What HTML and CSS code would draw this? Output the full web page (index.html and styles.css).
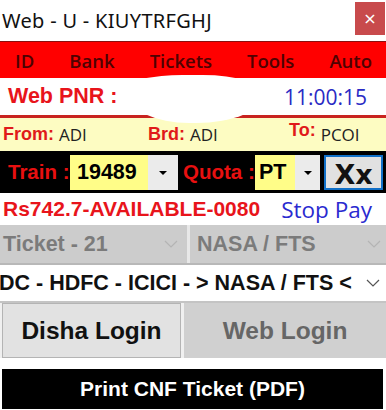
FILE: index.html
```html
<!DOCTYPE html>
<html>
<head>
<meta charset="utf-8">
<link rel="stylesheet" href="styles.css">
</head>
<body>
<div class="win">
  <div class="titlebar">
    <span class="title">Web - U - KIUYTRFGHJ</span>
    <span class="close">×</span>
  </div>
  <div class="menu">
    <span>ID</span><span>Bank</span><span>Tickets</span><span>Tools</span><span>Auto</span>
  </div>
  <div class="pnr">
    <span class="pnr-label">Web PNR :</span>
    <span class="time">11:00:15</span>
    <span class="blob"></span>
  </div>
  <div class="route">
    <span class="lbl">From:</span><span class="val v1">ADI</span>
    <span class="lbl l2">Brd:</span><span class="val v2">ADI</span>
    <span class="lbl l3">To:</span><span class="val">PCOI</span>
  </div>
  <div class="train">
    <span class="tlbl">Train :</span>
    <div class="combo c1"><span class="field">19489</span><span class="arrow"></span></div>
    <span class="tlbl q">Quota :</span>
    <div class="combo c2"><span class="field">PT</span><span class="arrow"></span></div>
    <div class="xx">Xx</div>
  </div>
  <div class="status">
    <span class="avail">Rs742.7-AVAILABLE-0080</span>
    <span class="stop">Stop Pay</span>
  </div>
  <div class="tickets">
    <div class="dis d1"><span>Ticket - 21</span><svg class="chev" viewBox="0 0 14 8"><path d="M1 1 L7 7 L13 1" fill="none" stroke="#b4b4b4" stroke-width="1.2"/></svg></div>
    <div class="dis d2"><span>NASA / FTS</span><svg class="chev" viewBox="0 0 14 8"><path d="M1 1 L7 7 L13 1" fill="none" stroke="#b4b4b4" stroke-width="1.2"/></svg></div>
  </div>
  <div class="bank">
    <span class="banktext">DC - HDFC - ICICI - &gt; NASA / FTS &lt;</span>
    <svg class="chev" viewBox="0 0 14 8"><path d="M1 1 L7 7 L13 1" fill="none" stroke="#555" stroke-width="1.2"/></svg>
  </div>
  <div class="logins">
    <div class="btn disha">Disha Login</div>
    <div class="btn web">Web Login</div>
  </div>
  <div class="printwrap">
    <div class="print">Print CNF Ticket (PDF)</div>
  </div>
</div>
</body>
</html>
```

FILE: styles.css
```css
html, body {
  margin: 0;
  padding: 0;
  background: #ffffff;
}
.win {
  width: 386px;
  height: 410px;
  overflow: hidden;
  font-family: "Liberation Sans", Arial, sans-serif;
}
.titlebar {
  height: 41px;
  display: flex;
  align-items: flex-start;
  justify-content: space-between;
  background: #ffffff;
}
.title {
  font-family: "Noto Sans", "Open Sans", sans-serif;
  font-size: 20px;
  color: #111;
  padding: 7px 0 0 2px;
  letter-spacing: 0.3px;
}
.close {
  width: 30px;
  height: 33px;
  margin: 2px 1px 0 0;
  background: #c84a4c;
  color: #fff;
  font-family: "DejaVu Sans", sans-serif;
  font-size: 16px;
  display: flex;
  align-items: center;
  justify-content: center;
}
.menu {
  height: 36px;
  border-top: 1px solid #8a1010;
  background: #ff0000;
  display: flex;
  align-items: center;
  justify-content: space-between;
  padding: 0 14px 0 15px;
  font-family: "Open Sans", "Noto Sans", sans-serif;
  font-weight: 600;
  font-size: 18.5px;
  color: #4e0202;
}
.pnr {
  position: relative;
  height: 37px;
  border-bottom: 3px solid #c8231f;
  display: flex;
  align-items: center;
  justify-content: space-between;
  padding: 0 19px 0 8px;
  background: #fff;
}
.pnr-label {
  font-weight: bold;
  font-size: 21.5px;
  color: #e8141b;
}
.time {
  font-family: "Open Sans", sans-serif;
  font-size: 21px;
  color: #2a2ac4;
}
.blob {
  position: absolute;
  left: 128px;
  top: -3px;
  width: 136px;
  height: 48px;
  background: #fff;
  border-radius: 40% 45% 50% 45% / 30% 40% 60% 60%;
}
.route {
  height: 33px;
  background: #fdfcc2;
  display: flex;
  align-items: center;
  padding-left: 3px;
  font-size: 18px;
}
.lbl {
  font-weight: bold;
  color: #e01a1a;
}
.val {
  font-family: "Open Sans", sans-serif;
  font-size: 17px;
  color: #222;
  margin-left: 5px;
}
.v1 { width: 89px; }
.v2 { width: 99px; }
.l3 { position: relative; top: -4px; }
.train {
  height: 42px;
  background: #000;
  display: flex;
  align-items: center;
  padding-left: 8px;
}
.tlbl {
  font-weight: bold;
  font-size: 20.5px;
  color: #e81010;
  width: 62px;
  white-space: nowrap;
}
.tlbl.q {
  width: 72px;
  margin-left: 5px;
}
.combo {
  height: 35px;
  display: flex;
}
.field {
  background: #fffd88;
  font-weight: bold;
  font-size: 21.5px;
  color: #000;
  display: flex;
  align-items: center;
  padding-left: 7px;
}
.c1 .field { width: 71px; }
.c2 .field { width: 36px; padding-left: 4px; }
.arrow {
  width: 30px;
  background: #ebebeb;
  display: flex;
  align-items: center;
  justify-content: center;
}
.c2 .arrow { width: 25px; }
.arrow::after {
  content: "";
  border-left: 4px solid transparent;
  border-right: 4px solid transparent;
  border-top: 4px solid #000;
  margin-top: 2px;
}
.xx {
  margin-left: 4px;
  width: 59px;
  height: 35px;
  border: 2px solid #1170c8;
  background: #e1e1e1;
  display: flex;
  align-items: center;
  justify-content: center;
  font-family: "DejaVu Sans", sans-serif;
  font-weight: bold;
  font-size: 27px;
  color: #111;
  padding-top: 5px;
  box-sizing: border-box;
}
.status {
  height: 32px;
  display: flex;
  align-items: center;
  justify-content: space-between;
  padding: 0 14px 0 3px;
}
.avail {
  font-weight: bold;
  font-size: 21px;
  color: #e8141b;
}
.stop {
  font-family: "Open Sans", sans-serif;
  font-size: 22.5px;
  color: #2a2ad0;
}
.tickets {
  height: 38px;
  display: flex;
  gap: 3px;
  background: #e8e8e8;
  border-bottom: 2px solid #b8b8b8;
}
.dis {
  background: #cccccc;
  display: flex;
  align-items: center;
  justify-content: space-between;
  font-weight: bold;
  font-size: 21.5px;
  color: #7b7b7b;
  box-sizing: border-box;
}
.d1 { width: 187px; padding: 0 9px 0 3px; }
.d2 { flex: 1; padding: 0 5px 0 7px; }
.chev {
  width: 14px;
  height: 8px;
  flex: none;
}
.bank {
  height: 36px;
  display: flex;
  align-items: center;
  justify-content: space-between;
  padding-right: 6px;
  background: #fff;
  border-bottom: 2px solid #c4c4c4;
}
.banktext {
  font-weight: bold;
  font-size: 21.5px;
  color: #111;
  white-space: nowrap;
  margin-left: -1px;
}
.logins {
  height: 55px;
  display: flex;
  gap: 3px;
  padding-left: 2px;
  background: #f0f0f0;
}
.btn {
  display: flex;
  align-items: center;
  justify-content: center;
  font-weight: bold;
  font-size: 24.5px;
  box-sizing: border-box;
}
.disha {
  width: 179px;
  background: #e2e2e2;
  border: 1px solid #b4b4b4;
  color: #111;
}
.web {
  flex: 1;
  background: #d0d0d0;
  color: #666;
}
.printwrap {
  height: 51px;
  padding: 11px 3px 0 2px;
  box-sizing: border-box;
  background: #fff;
}
.print {
  height: 40px;
  background: #000;
  color: #fff;
  font-weight: bold;
  font-size: 21px;
  display: flex;
  align-items: center;
  justify-content: center;
}
```
